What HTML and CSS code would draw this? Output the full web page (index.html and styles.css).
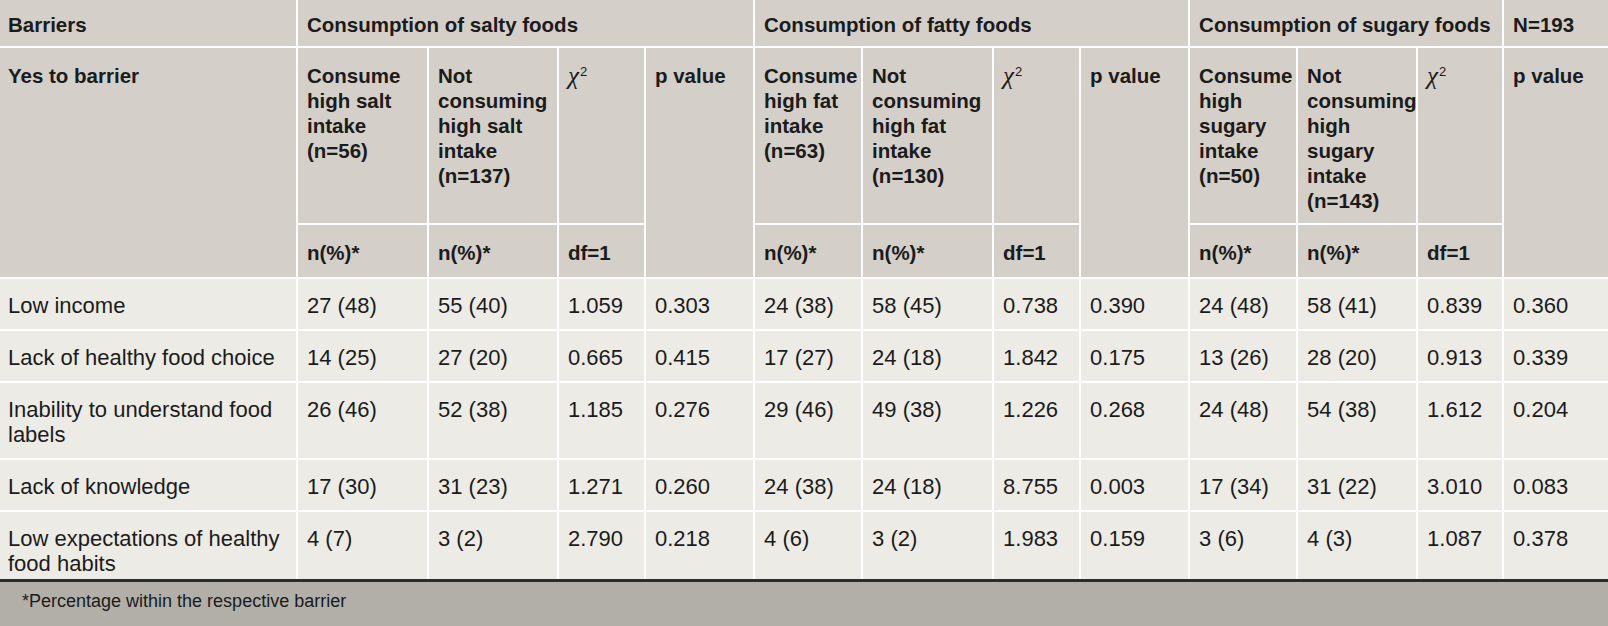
FILE: index.html
```html
<!DOCTYPE html>
<html lang="en">
<head>
<meta charset="utf-8">
<title>Barriers and consumption</title>
<link rel="stylesheet" href="styles.css">
</head>
<body>
<div class="sheet">
<table class="data">
  <colgroup>
    <col class="c-label">
    <col class="c131"><col class="c130"><col class="c87"><col class="c109">
    <col class="c108"><col class="c131"><col class="c87"><col class="c109">
    <col class="c108"><col class="c120"><col class="c86"><col class="c105">
  </colgroup>
  <thead>
    <tr class="h1">
      <th class="first">Barriers</th>
      <th colspan="4">Consumption of salty foods</th>
      <th colspan="4">Consumption of fatty foods</th>
      <th colspan="3">Consumption of sugary foods</th>
      <th>N=193</th>
    </tr>
    <tr class="h2">
      <th class="first" rowspan="2">Yes to barrier</th>
      <th>Consume<br>high salt<br>intake<br>(n=56)</th>
      <th>Not<br>consuming<br>high salt<br>intake<br>(n=137)</th>
      <th class="chi"><span class="chi-glyph">χ</span><sup>2</sup></th>
      <th rowspan="2">p value</th>
      <th>Consume<br>high fat<br>intake<br>(n=63)</th>
      <th>Not<br>consuming<br>high fat<br>intake<br>(n=130)</th>
      <th class="chi"><span class="chi-glyph">χ</span><sup>2</sup></th>
      <th rowspan="2">p value</th>
      <th>Consume<br>high<br>sugary<br>intake<br>(n=50)</th>
      <th>Not<br>consuming<br>high<br>sugary<br>intake<br>(n=143)</th>
      <th class="chi"><span class="chi-glyph">χ</span><sup>2</sup></th>
      <th rowspan="2">p value</th>
    </tr>
    <tr class="h3">
      <th>n(%)*</th><th>n(%)*</th><th>df=1</th>
      <th>n(%)*</th><th>n(%)*</th><th>df=1</th>
      <th>n(%)*</th><th>n(%)*</th><th>df=1</th>
    </tr>
  </thead>
  <tbody>
    <tr>
      <td class="first">Low income</td>
      <td>27 (48)</td><td>55 (40)</td><td>1.059</td><td>0.303</td>
      <td>24 (38)</td><td>58 (45)</td><td>0.738</td><td>0.390</td>
      <td>24 (48)</td><td>58 (41)</td><td>0.839</td><td>0.360</td>
    </tr>
    <tr>
      <td class="first">Lack of healthy food choice</td>
      <td>14 (25)</td><td>27 (20)</td><td>0.665</td><td>0.415</td>
      <td>17 (27)</td><td>24 (18)</td><td>1.842</td><td>0.175</td>
      <td>13 (26)</td><td>28 (20)</td><td>0.913</td><td>0.339</td>
    </tr>
    <tr>
      <td class="first">Inability to understand food labels</td>
      <td>26 (46)</td><td>52 (38)</td><td>1.185</td><td>0.276</td>
      <td>29 (46)</td><td>49 (38)</td><td>1.226</td><td>0.268</td>
      <td>24 (48)</td><td>54 (38)</td><td>1.612</td><td>0.204</td>
    </tr>
    <tr>
      <td class="first">Lack of knowledge</td>
      <td>17 (30)</td><td>31 (23)</td><td>1.271</td><td>0.260</td>
      <td>24 (38)</td><td>24 (18)</td><td>8.755</td><td>0.003</td>
      <td>17 (34)</td><td>31 (22)</td><td>3.010</td><td>0.083</td>
    </tr>
    <tr class="last">
      <td class="first">Low expectations of healthy food habits</td>
      <td>4 (7)</td><td>3 (2)</td><td>2.790</td><td>0.218</td>
      <td>4 (6)</td><td>3 (2)</td><td>1.983</td><td>0.159</td>
      <td>3 (6)</td><td>4 (3)</td><td>1.087</td><td>0.378</td>
    </tr>
  </tbody>
</table>
<div class="note">*Percentage within the respective barrier</div>
</div>
</body>
</html>
```

FILE: styles.css
```css
html, body {
  margin: 0;
  padding: 0;
  background: #b2afa9;
}

.sheet {
  width: 1608px;
  font-family: "Liberation Sans", Arial, sans-serif;
  color: #1b1b1b;
}

.data {
  width: 1608px;
  table-layout: fixed;
  border-collapse: collapse;
  border-style: hidden;
}

.c-label { width: 297px; }
.c131 { width: 131px; }
.c130 { width: 130px; }
.c87 { width: 87px; }
.c109 { width: 109px; }
.c108 { width: 108px; }
.c120 { width: 120px; }
.c86 { width: 86px; }
.c105 { width: 105px; }

.data th,
.data td {
  border: 2px solid #ffffff;
  text-align: left;
  vertical-align: top;
  padding: 0 0 0 9px;
  white-space: nowrap;
}

.data th {
  background: #d4cfc8;
  font-weight: bold;
  font-size: 20.5px;
  line-height: 25px;
}

.data td {
  background: #edebe6;
  font-weight: normal;
  font-size: 22px;
  line-height: 25px;
  padding-top: 14px;
  padding-bottom: 11px;
}

.data td.first {
  white-space: normal;
  padding-right: 6px;
}

.data .first {
  padding-left: 8px;
}

.h1 th {
  padding-top: 12px;
  padding-bottom: 9px;
}

.h2 th {
  padding-top: 15px;
  padding-bottom: 10px;
}

.h3 th {
  padding-top: 15px;
  padding-bottom: 12px;
}

.data th.chi {
  font-weight: normal;
  font-size: 22px;
  padding-left: 9px;
}

.chi-glyph {
  font-family: "Liberation Serif", "Times New Roman", serif;
  font-style: italic;
  font-size: 25px;
}

.chi sup {
  font-size: 13px;
  line-height: 0;
  vertical-align: 8px;
  margin-left: 1px;
}

.data tr.last td {
  padding-bottom: 3px;
}

.note {
  border-top: 3px solid #2b2b2b;
  background: #b2afa9;
  height: 34px;
  padding: 9px 0 0 22px;
  font-size: 18px;
  line-height: 20px;
  color: #1b1b1b;
}
```
